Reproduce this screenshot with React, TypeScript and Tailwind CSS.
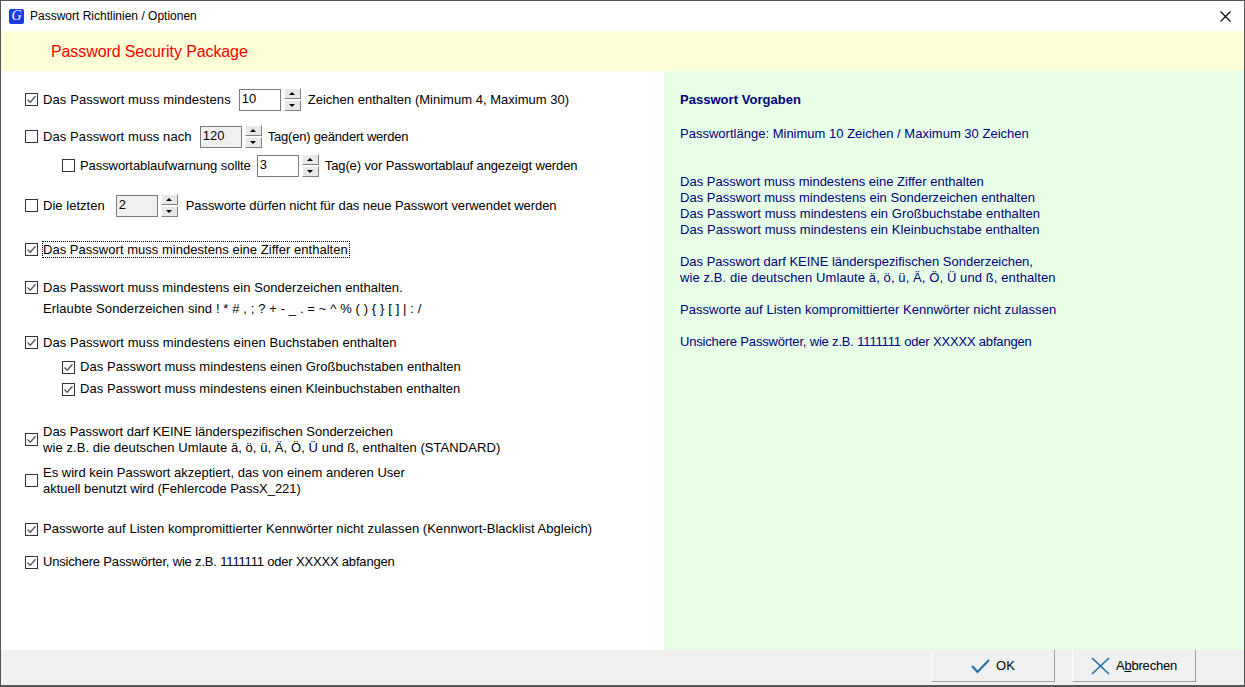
import React from "react";

const Check = ({ on }: { on?: boolean }) => (
  <span className="w-[13px] h-[13px] shrink-0 border border-[#333333] bg-white flex items-center justify-center">
    {on && (
      <svg width="11" height="11" viewBox="0 0 11 11" fill="none">
        <path d="M1.5 5.5 L4.2 8.2 L9.5 2.2" stroke="#555555" strokeWidth="1.3" />
      </svg>
    )}
  </span>
);

const Spin = ({ value, disabled }: { value: string; disabled?: boolean }) => (
  <span className="flex items-center h-[23px] shrink-0">
    <span
      className={`w-[42px] h-[22px] border border-[#7a7a7a] pl-[2px] pb-px flex items-center ${disabled ? "bg-[#f0f0f0]" : "bg-white"}`}
    >
      {value}
    </span>
    <span className="ml-[3px] flex flex-col gap-px w-[17px]">
      <span className="h-[11px] bg-[#e8e8e8] border-t border-l border-t-white border-l-white border-r border-b border-r-[#808080] border-b-[#808080] flex items-center justify-center">
        <span className="w-0 h-0 border-x-[3px] border-x-transparent border-b-[3px] border-b-black" />
      </span>
      <span className="h-[11px] bg-[#e8e8e8] border-t border-l border-t-white border-l-white border-r border-b border-r-[#808080] border-b-[#808080] flex items-center justify-center">
        <span className="w-0 h-0 border-x-[3px] border-x-transparent border-t-[3px] border-t-black" />
      </span>
    </span>
  </span>
);

const Row = ({ on, children, className = "", boxClass = "" }: { on?: boolean; children: React.ReactNode; className?: string; boxClass?: string }) => (
  <div className={`flex items-center ${className}`}>
    <span className={boxClass}>
      <Check on={on} />
    </span>
    <span className="ml-[5px] flex items-center">{children}</span>
  </div>
);

export default function App() {
  return (
    <div className="w-[1245px] h-[687px] flex flex-col bg-white border border-[#555555] border-b-2 text-[13px] leading-[16px] text-black overflow-hidden font-['Liberation_Sans',Arial,sans-serif] tracking-[0.03px]">
      <div className="h-[30px] shrink-0 flex items-center pl-[8px] pr-[13px]">
        <span className="w-[15px] h-[15px] rounded-[2px] bg-[#1a3ce8] text-white italic font-['Liberation_Serif',serif] text-[14px] leading-[14px] text-center">
          G
        </span>
        <span className="ml-[6px] text-[12px] tracking-normal">Passwort Richtlinien / Optionen</span>
        <svg className="ml-auto" width="11" height="11" viewBox="0 0 11 11" stroke="#000000" strokeWidth="1.1">
          <path d="M0.5 0.5 L10.5 10.5 M10.5 0.5 L0.5 10.5" />
        </svg>
      </div>

      <div className="h-[40px] shrink-0 bg-[#ffffd7] flex items-center pl-[50px] pt-[2px] text-[16px] tracking-[-0.1px] text-[#ff0000]">
        Password Security Package
      </div>

      <div className="flex flex-1 min-h-0">
        <div className="w-[663px] shrink-0 pl-[24px] flex flex-col">
          <Row on className="mt-[17px] h-[23px]">
            <span className="tracking-[0.1px]">Das Passwort muss mindestens</span>
            <span className="ml-[8px]"><Spin value="10" /></span>
            <span className="ml-[7px] tracking-[0.01px]">Zeichen enthalten (Minimum 4, Maximum 30)</span>
          </Row>
          <Row className="mt-[14px] h-[23px]">
            <span className="tracking-[0.09px]">Das Passwort muss nach</span>
            <span className="ml-[8px]"><Spin value="120" disabled /></span>
            <span className="ml-[6px] tracking-[-0.2px]">Tag(en) geändert werden</span>
          </Row>
          <Row className="mt-[6px] h-[23px] ml-[37px]">
            <span className="tracking-[-0.07px]">Passwortablaufwarnung sollte</span>
            <span className="ml-[6px]"><Spin value="3" /></span>
            <span className="ml-[6px] tracking-[-0.11px]">Tag(e) vor Passwortablauf angezeigt werden</span>
          </Row>
          <Row className="mt-[17px] h-[23px]">
            Die letzten
            <span className="ml-[11px]"><Spin value="2" disabled /></span>
            <span className="ml-[8px] tracking-[-0.07px]">Passworte dürfen nicht für das neue Passwort verwendet werden</span>
          </Row>
          <Row on className="mt-[21px] h-[23px]">
            <span className="border border-dotted border-black h-[17px] flex items-center -ml-[1px] pr-[1px]">
              Das Passwort muss mindestens eine Ziffer enthalten
            </span>
          </Row>
          <Row on className="mt-[15px] h-[23px]">
            <span className="tracking-[0.05px]">Das Passwort muss mindestens ein Sonderzeichen enthalten.</span>
          </Row>
          <div className="ml-[18px] h-[16px] mt-[2px] flex items-center whitespace-pre tracking-[0.11px]">
            {"Erlaubte Sonderzeichen sind ! * # , ; ? + - _ . = ~ ^ % ( ) { } [ ] | : /"}
          </div>
          <Row on className="mt-[14px] h-[23px]">
            <span className="tracking-[0.07px]">Das Passwort muss mindestens einen Buchstaben enthalten</span>
          </Row>
          <Row on className="mt-[2px] h-[22px] ml-[37px]">
            <span className="tracking-[0.05px]">Das Passwort muss mindestens einen Großbuchstaben enthalten</span>
          </Row>
          <Row on className="h-[22px] ml-[37px]">
            <span className="tracking-[0.05px]">Das Passwort muss mindestens einen Kleinbuchstaben enthalten</span>
          </Row>
          <Row on className="mt-[24px] h-[32px]" boxClass="-mt-[2px]">
            <span>
              <span className="tracking-[-0.01px]">Das Passwort darf KEINE länderspezifischen Sonderzeichen</span>
              <br />
              <span className="tracking-[0.07px]">wie z.B. die deutschen Umlaute ä, ö, ü, Ä, Ö, Ü und ß, enthalten (STANDARD)</span>
            </span>
          </Row>
          <Row className="mt-[9px] h-[32px]" boxClass="-mt-[2px]">
            <span>
              <span className="tracking-[0.01px]">Es wird kein Passwort akzeptiert, das von einem anderen User</span>
              <br />
              <span className="tracking-[-0.02px]">aktuell benutzt wird (Fehlercode PassX_221)</span>
            </span>
          </Row>
          <Row on className="mt-[22px] h-[20px]">
            Passworte auf Listen kompromittierter Kennwörter nicht zulassen (Kennwort-Blacklist Abgleich)
          </Row>
          <Row on className="mt-[13px] h-[20px]">
            <span className="tracking-[-0.18px]">Unsichere Passwörter, wie z.B. 1111111 oder XXXXX abfangen</span>
          </Row>
        </div>

        <div className="flex-1 bg-[#e6ffe6] text-[#000080] pl-[16px] pt-[21px]">
          <p className="font-bold">Passwort Vorgaben</p>
          <p className="mt-[18px] tracking-[0.01px]">Passwortlänge: Minimum 10 Zeichen / Maximum 30 Zeichen</p>
          <p className="mt-[32px] tracking-[0.01px]">Das Passwort muss mindestens eine Ziffer enthalten</p>
          <p>Das Passwort muss mindestens ein Sonderzeichen enthalten</p>
          <p className="tracking-[0.07px]">Das Passwort muss mindestens ein Großbuchstabe enthalten</p>
          <p className="tracking-[0.07px]">Das Passwort muss mindestens ein Kleinbuchstabe enthalten</p>
          <p className="mt-[16px] tracking-[-0.02px]">Das Passwort darf KEINE länderspezifischen Sonderzeichen,</p>
          <p className="tracking-[0.1px]">wie z.B. die deutschen Umlaute ä, ö, ü, Ä, Ö, Ü und ß, enthalten</p>
          <p className="mt-[16px]">Passworte auf Listen kompromittierter Kennwörter nicht zulassen</p>
          <p className="mt-[16px] tracking-[-0.18px]">Unsichere Passwörter, wie z.B. 1111111 oder XXXXX abfangen</p>
        </div>
      </div>

      <div className="h-[35px] shrink-0 bg-[#f0f0f0] flex justify-end pr-[48px] gap-[17px]">
        <button className="w-[124px] h-[32px] bg-[#f0f0f0] border-l border-l-white border-r border-b border-[#a0a0a0] flex items-center justify-center gap-[6px]">
          <svg width="19" height="16" viewBox="0 0 19 16" fill="none" stroke="#1d6fa8" strokeWidth="2">
            <path d="M1 8 L6.5 14 L18 2" />
          </svg>
          OK
        </button>
        <button className="w-[124px] h-[32px] bg-[#f0f0f0] border-l border-l-white border-r border-b border-[#a0a0a0] flex items-center justify-center gap-[6px]">
          <svg width="19" height="18" viewBox="0 0 19 18" fill="none" stroke="#1d6fa8" strokeWidth="1.6">
            <path d="M1 1 L18 17 M18 1 L1 17" />
          </svg>
          <span className="tracking-[-0.2px]">
            A<span className="underline">b</span>brechen
          </span>
        </button>
      </div>
    </div>
  );
}
